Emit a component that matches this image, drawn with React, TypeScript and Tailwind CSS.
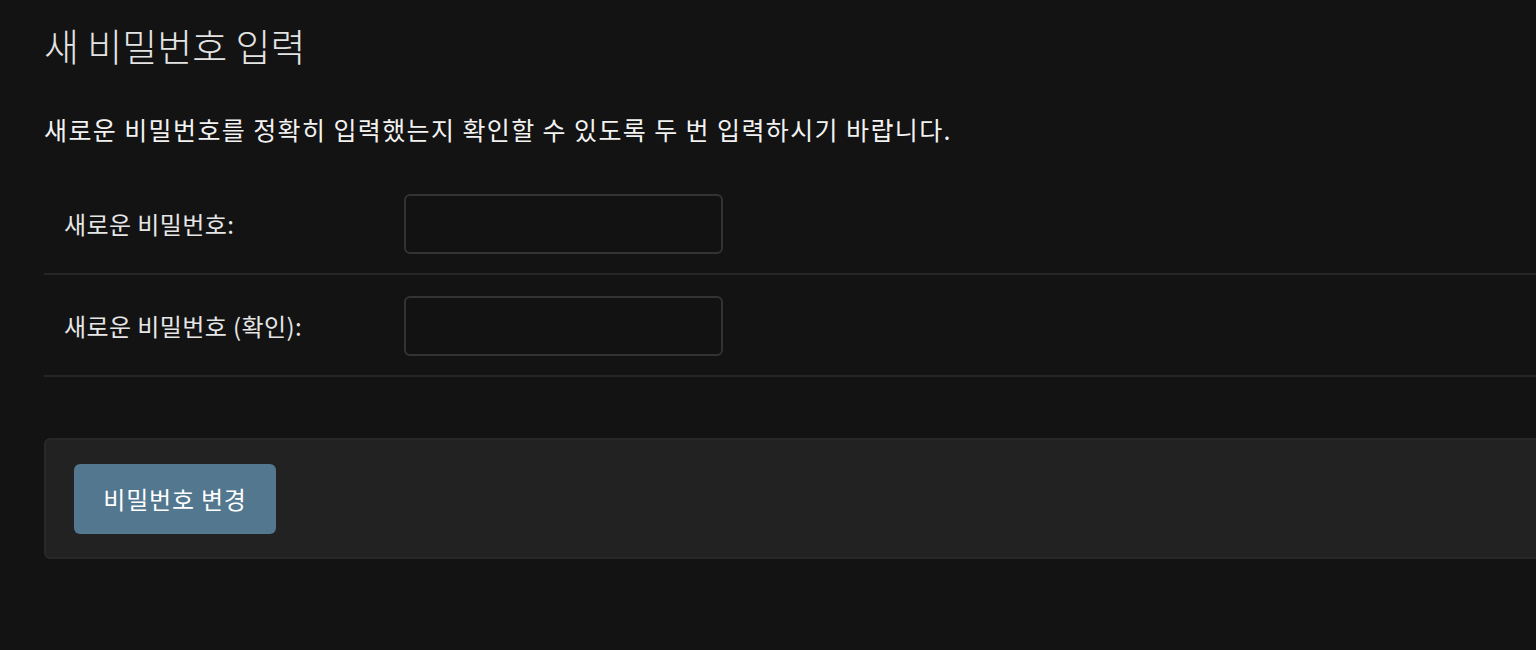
import React from "react";

const fontStack = { fontFamily: '"Noto Sans CJK KR", "Noto Sans", sans-serif' };

function FieldRow({ label, id }: { label: string; id: string }) {
  return (
    <div className="flex items-center border-b-2 border-[#262626] pt-[21px] pb-[19px] pl-[20px]">
      <label
        htmlFor={id}
        className="w-[340px] shrink-0 text-[24px] tracking-[0.4px] text-[#e6e6e6]"
      >
        {label}
      </label>
      <input
        id={id}
        type="password"
        className="h-[60px] w-[319px] rounded-[6px] border-2 border-[#333333] bg-[#121212] px-3 text-white outline-none"
      />
    </div>
  );
}

export default function App() {
  return (
    <div className="min-h-[650px] w-full overflow-hidden bg-[#131313]" style={fontStack}>
      <div className="ml-[44px] w-[1560px]">
        {/* Heading */}
        <h1 className="pt-[18px] text-[38px] font-light leading-[54px] text-[#e4e4e4]">
          새 비밀번호 입력
        </h1>

        {/* Description */}
        <p className="mt-[39px] text-[25px] leading-[36px] tracking-[1.4px] text-[#f2f2f2]">
          새로운 비밀번호를 정확히 입력했는지 확인할 수 있도록 두 번 입력하시기 바랍니다.
        </p>

        {/* Fields */}
        <div className="mt-[26px]">
          <FieldRow id="pw1" label="새로운 비밀번호:" />
          <FieldRow id="pw2" label="새로운 비밀번호 (확인):" />
        </div>

        {/* Actions */}
        <div className="mt-[61px] rounded-[6px] border-2 border-[#282828] bg-[#222222] px-[28px] pt-[24px] pb-[23px]">
          <button className="h-[70px] w-[202px] rounded-[6px] bg-[#52778f] text-[24px] tracking-[0.8px] text-white">
            비밀번호 변경
          </button>
        </div>
      </div>
    </div>
  );
}
